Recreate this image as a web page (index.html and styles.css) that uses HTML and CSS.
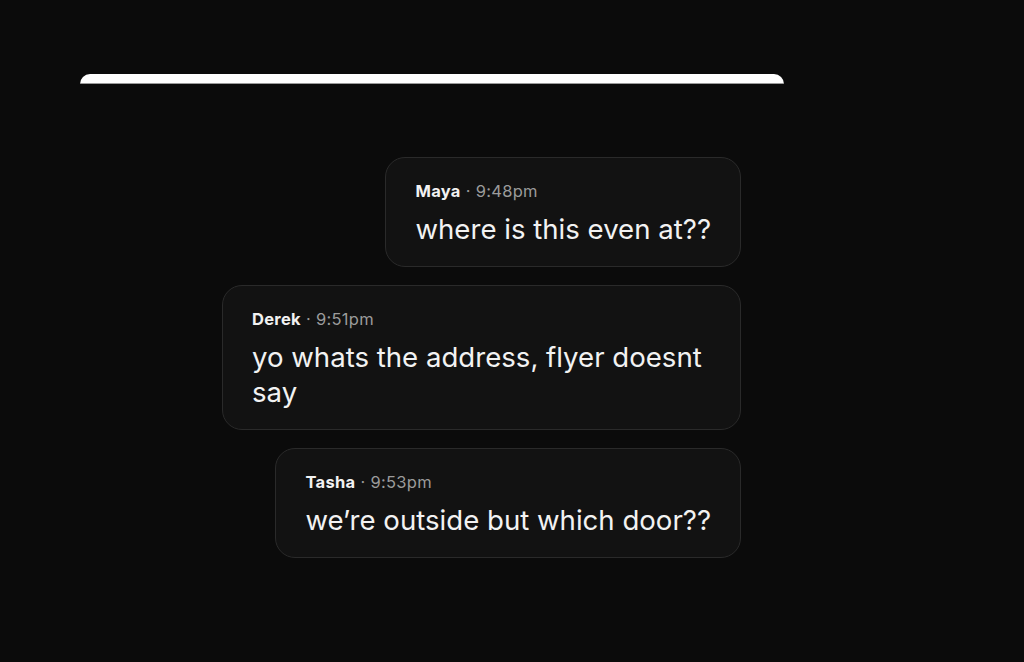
FILE: index.html
```html
<!DOCTYPE html>
<html>
  <head>
    <meta charset="UTF-8">
    <title>Chat</title>
    <link rel="stylesheet" href="styles.css">
  </head>

  <body>
    <div id="page">
      <div id="sheet"></div>
      <div id="thread">
        <div class="msg">
          <div class="msg__head"><span class="msg__name">Maya</span> · 9:48pm</div>
          <div class="msg__text">where is this even at??</div>
        </div>
        <div class="msg">
          <div class="msg__head"><span class="msg__name">Derek</span> · 9:51pm</div>
          <div class="msg__text">yo whats the address, flyer doesnt say</div>
        </div>
        <div class="msg">
          <div class="msg__head"><span class="msg__name">Tasha</span> · 9:53pm</div>
          <div class="msg__text">we’re outside but which door??</div>
        </div>
      </div>
    </div>
  </body>
</html>
```

FILE: styles.css
```css
* {
  font-family: 'Inter', 'Noto Sans', sans-serif;
  box-sizing: border-box;
}
html, body {
  margin: 0;
  padding: 0;
  height: 100%;
  width: 100%;
  background: #0b0b0b;
}

#page {
  padding: 74px 0 0 80px;
}

#sheet {
  width: 704px;
  height: 10px;
  background: #fff;
  border-radius: 10px 10px 0 0;
  border-bottom: 1px solid #9a9a9a;
}

#thread {
  width: 704px;
  margin-top: 73px;
  padding-right: 43px;
  display: flex;
  flex-direction: column;
  align-items: flex-end;
  gap: 18px;
}

.msg {
  max-width: 519px;
  padding: 23px 29px 19px 29px;
  background: #121212;
  border: 1px solid #2a2a2a;
  border-radius: 20px;
}

.msg__head {
  font-size: 16.5px;
  line-height: 20px;
  letter-spacing: 0.3px;
  color: #9b9b9b;
}
.msg__name {
  color: #f2f2f2;
  font-weight: bold;
}

.msg__text {
  margin-top: 11px;
  font-size: 27.6px;
  line-height: 35px;
  color: #f2f2f2;
}
```
